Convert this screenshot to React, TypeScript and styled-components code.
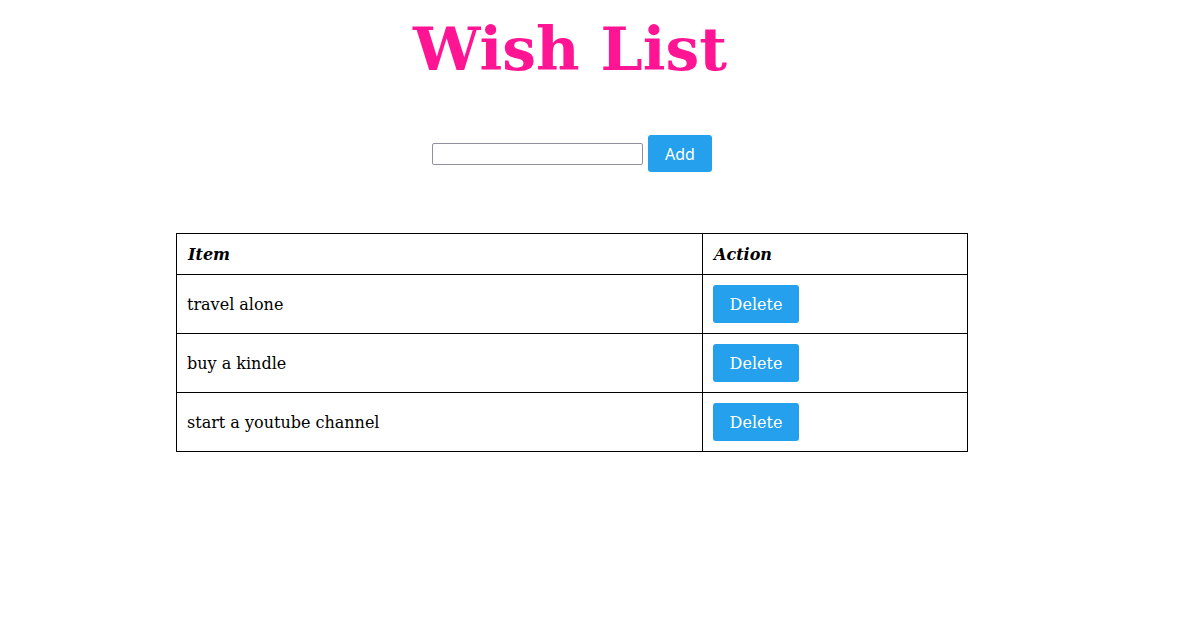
import React, { useState } from "react";
import styled, { createGlobalStyle } from "styled-components";

const Global = createGlobalStyle`
  html, body { margin: 0; padding: 0; background: #ffffff; }
  body { margin: 8px; font-family: "DejaVu Serif", serif; color: #000; }
`;

const Page = styled.div`
  width: 1128px;
  display: flex;
  flex-direction: column;
  align-items: center;
`;

const Title = styled.h1`
  margin: 4px 4px 0 0;
  font-family: "DejaVu Serif", serif;
  font-weight: bold;
  font-size: 60px;
  line-height: 74px;
  color: #ff1493;
`;

const Form = styled.form`
  margin-top: 49px;
  display: flex;
  align-items: center;
  gap: 5px;
`;

const TextInput = styled.input`
  width: 211px;
  height: 22px;
  box-sizing: border-box;
  border: 1px solid #8f8f9d;
  border-radius: 2px;
  padding: 1px 4px;
  font-size: 14px;
  font-family: "Noto Sans", sans-serif;
`;

const BaseButton = styled.button`
  background: #24a0ed;
  color: #ffffff;
  border: none;
  border-radius: 3px;
  font-size: 16px;
  cursor: pointer;
  line-height: 1;
  padding: 0;
`;

const AddButton = styled(BaseButton)`
  font-family: "Noto Sans", sans-serif;
  width: 64px;
  height: 37px;
`;

const DeleteButton = styled(BaseButton)`
  font-family: "DejaVu Serif", serif;
  width: 86px;
  height: 38px;
  padding-top: 2px;
`;

const Table = styled.table`
  margin-top: 61px;
  width: 792px;
  border-collapse: collapse;
`;

const Th = styled.th<{ $w?: number }>`
  border: 1px solid #000;
  padding: 11px 10px 9px 11px;
  text-align: left;
  font-family: "DejaVu Serif", serif;
  font-style: italic;
  font-weight: bold;
  font-size: 16px;
  line-height: 20px;
  width: ${(p) => (p.$w ? `${p.$w}px` : "auto")};
`;

const Td = styled.td`
  border: 1px solid #000;
  padding: 10px 10px;
  font-family: "DejaVu Serif", serif;
  font-size: 16px;
  line-height: 19px;
  vertical-align: middle;
`;

export default function App() {
  const [items, setItems] = useState([
    "travel alone",
    "buy a kindle",
    "start a youtube channel",
  ]);
  const [value, setValue] = useState("");

  return (
    <>
      <Global />
      <Page>
        <Title>Wish List</Title>
        <Form
          onSubmit={(e) => {
            e.preventDefault();
            if (value.trim()) {
              setItems([...items, value.trim()]);
              setValue("");
            }
          }}
        >
          <TextInput value={value} onChange={(e) => setValue(e.target.value)} />
          <AddButton type="submit">Add</AddButton>
        </Form>
        <Table>
          <thead>
            <tr>
              <Th $w={504}>Item</Th>
              <Th>Action</Th>
            </tr>
          </thead>
          <tbody>
            {items.map((it, i) => (
              <tr key={i}>
                <Td>{it}</Td>
                <Td>
                  <DeleteButton onClick={() => setItems(items.filter((_, j) => j !== i))}>
                    Delete
                  </DeleteButton>
                </Td>
              </tr>
            ))}
          </tbody>
        </Table>
      </Page>
    </>
  );
}
